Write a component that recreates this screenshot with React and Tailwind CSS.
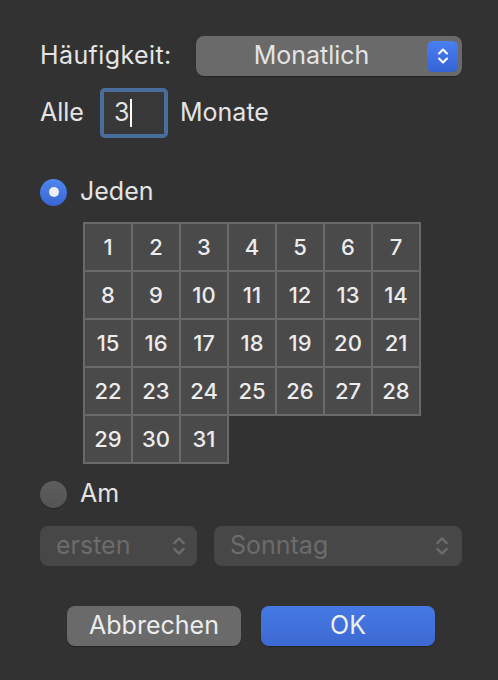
const days = Array.from({ length: 31 }, (_, i) => i + 1);

function Chevrons({ className, w = 12, h = 18 }) {
  return (
    <svg width={w} height={h} viewBox="0 0 12 18" className={className} fill="none" stroke="currentColor" strokeWidth="2" strokeLinecap="round" strokeLinejoin="round">
      <path d="M2 6.5 L6 2.5 L10 6.5" />
      <path d="M2 11.5 L6 15.5 L10 11.5" />
    </svg>
  );
}

export default function App() {
  return (
    <div
      className="w-[498px] h-[680px] bg-[#323232] text-[#e4e4e4] relative overflow-hidden"
      style={{ fontFamily: 'Inter, "Liberation Sans", Arial, sans-serif' }}
    >
      <div className="pt-[36px] pl-[40px] pr-[36px]">
        {/* Frequency */}
        <div className="flex items-center h-[40px]">
          <span className="text-[25px] tracking-[0.4px] w-[156px]">Häufigkeit:</span>
          <div className="flex-1 h-[40px] rounded-[8px] bg-[#6a6a6a] flex items-center relative shadow-[0_1px_1px_rgba(0,0,0,0.3)]">
            <span className="flex-1 text-center text-[25px]">Monatlich</span>
            <div className="w-[31px] h-[31px] mr-[4px] rounded-[6px] bg-gradient-to-b from-[#4a7ff0] to-[#3563d6] flex items-center justify-center text-white">
              <Chevrons />
            </div>
          </div>
        </div>

        {/* Every N months */}
        <div className="flex items-center mt-[12px] h-[50px]">
          <span className="text-[25px] w-[60px]">Alle</span>
          <div className="w-[68px] h-[50px] rounded-[5px] bg-[#4a6e9c] p-[4px]">
            <div className="w-full h-full bg-[#383838] flex items-center pl-[10px]">
              <span className="text-[25px]">3</span>
              <span className="w-[2px] h-[28px] bg-white ml-[1px]" />
            </div>
          </div>
          <span className="text-[25px] ml-[12px]">Monate</span>
        </div>

        {/* Jeden */}
        <div className="flex items-center mt-[40px] h-[28px]">
          <div className="w-[27px] h-[27px] rounded-full bg-gradient-to-b from-[#4f86ee] to-[#3866d4] flex items-center justify-center">
            <div className="w-[10px] h-[10px] rounded-full bg-[#f2f2ff]" />
          </div>
          <span className="text-[25px] ml-[13px]">Jeden</span>
        </div>

        {/* Day grid */}
        <div className="ml-[45px] mt-[18px] grid grid-cols-[repeat(7,46px)] auto-rows-[46px] gap-[2px] w-max">
          {days.map((d) => (
            <div
              key={d}
              className="bg-[#4a4a4a] shadow-[0_0_0_2px_#6a6a6a] flex items-center justify-center text-[22px] font-medium text-[#ececec]"
            >
              {d}
            </div>
          ))}
        </div>

        {/* Am */}
        <div className="flex items-center mt-[18px] h-[28px]">
          <div className="w-[27px] h-[27px] rounded-full bg-gradient-to-b from-[#5e5e5e] to-[#545454] shadow-[0_1px_1px_rgba(0,0,0,0.3)]" />
          <span className="text-[25px] ml-[13px]">Am</span>
        </div>

        {/* Disabled popups */}
        <div className="flex mt-[18px] gap-[17px]">
          <div className="w-[157px] h-[40px] rounded-[8px] bg-[#474747] flex items-center pl-[16px] pr-[11px] text-[#6c6c6c]">
            <span className="flex-1 text-[25px]">ersten</span>
            <Chevrons w={14} h={22} />
          </div>
          <div className="w-[248px] h-[40px] rounded-[8px] bg-[#474747] flex items-center pl-[16px] pr-[13px] text-[#6c6c6c]">
            <span className="flex-1 text-[25px]">Sonntag</span>
            <Chevrons w={14} h={22} />
          </div>
        </div>

        {/* Buttons */}
        <div className="flex mt-[40px] ml-[27px] gap-[20px]">
          <button className="w-[174px] h-[40px] rounded-[8px] bg-[#6a6a6a] text-[25px] text-[#ececec] shadow-[0_1px_1px_rgba(0,0,0,0.3)]">
            Abbrechen
          </button>
          <button className="w-[174px] h-[40px] rounded-[8px] bg-gradient-to-b from-[#4679e4] to-[#3c69d2] text-[25px] text-[#f0f0f0] shadow-[0_1px_1px_rgba(0,0,0,0.3)]">
            OK
          </button>
        </div>
      </div>
    </div>
  );
}
